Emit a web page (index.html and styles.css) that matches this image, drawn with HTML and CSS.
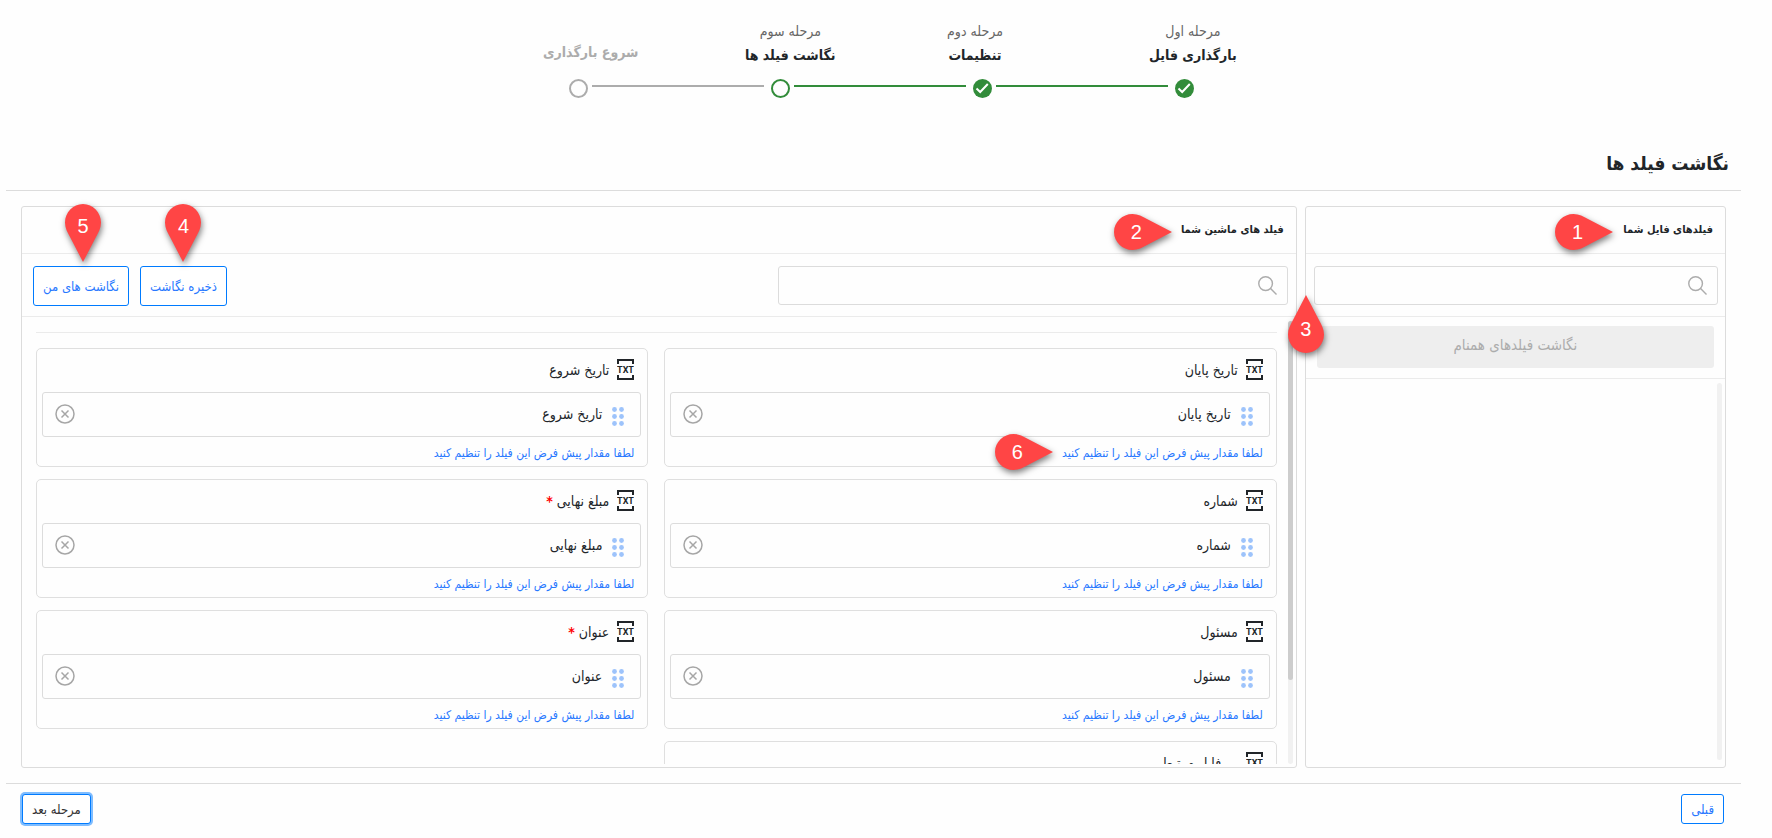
FILE: index.html
```html
<!DOCTYPE html>
<html lang="fa" dir="rtl">
<head>
<meta charset="utf-8">
<meta name="viewport" content="width=device-width, initial-scale=1">
<title>نگاشت فیلد ها</title>
<link rel="stylesheet" href="styles.css">
</head>
<body>
<svg class="sprite" aria-hidden="true">
  <symbol id="i-search" viewBox="0 0 20 20"><circle cx="8" cy="8" r="7.2"/><path d="M13 13l6.500 6.500"/></symbol>
  <symbol id="i-txt" viewBox="0 0 17 21"><path d="M1 5V1h15v4M1 16v4h15v-4"/><text x="8.5" y="14">TXT</text></symbol>
  <symbol id="i-drag" viewBox="0 0 12 19"><circle cx="2.5" cy="2.5" r="2.4"/><circle cx="9.5" cy="2.5" r="2.4"/><circle cx="2.5" cy="9.5" r="2.4"/><circle cx="9.5" cy="9.5" r="2.4"/><circle cx="2.5" cy="16.5" r="2.4"/><circle cx="9.5" cy="16.5" r="2.4"/></symbol>
  <symbol id="i-close" viewBox="0 0 20 20"><circle cx="10" cy="10" r="9"/><path d="M6.5 6.5l7 7M13.5 6.5l-7 7"/></symbol>
  <symbol id="i-done" viewBox="0 0 19 19"><circle cx="9.5" cy="9.5" r="9.5"/><path d="M3.5 9.5l3.7 3.5L14.8 5"/></symbol>
  <symbol id="i-pin" viewBox="0 0 36 58"><path d="M18 0C8 0 0 8.500 0 18.500C0 24 2.500 28.500 5 33L18 58L31 33C33.500 28.500 36 24 36 18.500C36 8.500 28 0 18 0Z"/></symbol>
  <symbol id="i-pin-up" viewBox="0 0 36 58"><path d="M18 58C8 58 0 49.500 0 39.500C0 34 2.500 29.500 5 25L18 0L31 25C33.500 29.500 36 34 36 39.500C36 49.500 28 58 18 58Z"/></symbol>
  <symbol id="i-pin-right" viewBox="0 0 58 36"><path d="M0 18C0 8 8.500 0 18.500 0C24 0 28.500 2.500 33 5L58 18L33 31C28.500 33.500 24 36 18.500 36C8.500 36 0 28 0 18Z"/></symbol>
</svg>

<ol class="stepper">
  <li class="step done">
    <div class="step-label"><span class="step-sub">مرحله اول</span><span class="step-title">بارگذاری فایل</span></div>
    <div class="step-marker"><svg class="check"><use href="#i-done"/></svg></div>
  </li>
  <li class="step done">
    <div class="step-label"><span class="step-sub">مرحله دوم</span><span class="step-title">تنظیمات</span></div>
    <div class="step-marker"><svg class="check"><use href="#i-done"/></svg><span class="step-line"></span></div>
  </li>
  <li class="step done" aria-current="step">
    <div class="step-label"><span class="step-sub">مرحله سوم</span><span class="step-title">نگاشت فیلد ها</span></div>
    <div class="step-marker"><span class="ring"></span><span class="step-line"></span></div>
  </li>
  <li class="step">
    <div class="step-label"><span class="step-title">شروع بارگذاری</span></div>
    <div class="step-marker"><span class="ring"></span><span class="step-line"></span></div>
  </li>
</ol>

<h1 class="page-title">نگاشت فیلد ها</h1>

<main class="panels">
  <section class="panel">
    <span class="pin pin-up pin-3"><svg><use href="#i-pin-up"/></svg><b>3</b></span>
    <header class="panel-head"><h2>فیلدهای فایل شما</h2>
      <span class="pin pin-right pin-1"><svg><use href="#i-pin-right"/></svg><b>1</b></span>
    </header>
    <div class="toolbar">
      <label class="search"><svg><use href="#i-search"/></svg><input type="search" aria-label="جستجو"></label>
    </div>
    <div class="match-row"><button class="match" type="button" disabled>نگاشت فیلدهای همنام</button></div>
    <div class="scroll-area"><div class="file-fields"></div><div class="track"></div></div>
  </section>

  <section class="panel">
    <header class="panel-head"><h2>فیلد های ماشین شما</h2>
      <span class="pin pin-right pin-2"><svg><use href="#i-pin-right"/></svg><b>2</b></span>
    </header>
    <div class="toolbar">
      <label class="search half"><svg><use href="#i-search"/></svg><input type="search" aria-label="جستجو"></label>
      <div class="actions">
        <div class="action"><button class="btn tall" type="button">ذخیره نگاشت</button><span class="pin pin-down"><svg><use href="#i-pin"/></svg><b>4</b></span></div>
        <div class="action"><button class="btn tall" type="button">نگاشت های من</button><span class="pin pin-down"><svg><use href="#i-pin"/></svg><b>5</b></span></div>
      </div>
    </div>
    <div class="scroll-area">
      <div class="fields">
        <hr class="divider">
        <div class="cards">
          <article class="card">
            <h3><svg class="txt"><use href="#i-txt"/></svg>تاریخ پایان</h3>
            <div class="mapped"><svg class="drag"><use href="#i-drag"/></svg><span>تاریخ پایان</span><button type="button" aria-label="حذف"><svg><use href="#i-close"/></svg></button></div>
            <a class="hint" href="#">لطفا مقدار پیش فرض این فیلد را تنظیم کنید</a>
            <span class="pin pin-right pin-6"><svg><use href="#i-pin-right"/></svg><b>6</b></span>
          </article>
          <article class="card">
            <h3><svg class="txt"><use href="#i-txt"/></svg>تاریخ شروع</h3>
            <div class="mapped"><svg class="drag"><use href="#i-drag"/></svg><span>تاریخ شروع</span><button type="button" aria-label="حذف"><svg><use href="#i-close"/></svg></button></div>
            <a class="hint" href="#">لطفا مقدار پیش فرض این فیلد را تنظیم کنید</a>
          </article>
          <article class="card">
            <h3><svg class="txt"><use href="#i-txt"/></svg>شماره</h3>
            <div class="mapped"><svg class="drag"><use href="#i-drag"/></svg><span>شماره</span><button type="button" aria-label="حذف"><svg><use href="#i-close"/></svg></button></div>
            <a class="hint" href="#">لطفا مقدار پیش فرض این فیلد را تنظیم کنید</a>
          </article>
          <article class="card">
            <h3><svg class="txt"><use href="#i-txt"/></svg><span>مبلغ نهایی <em>*</em></span></h3>
            <div class="mapped"><svg class="drag"><use href="#i-drag"/></svg><span>مبلغ نهایی</span><button type="button" aria-label="حذف"><svg><use href="#i-close"/></svg></button></div>
            <a class="hint" href="#">لطفا مقدار پیش فرض این فیلد را تنظیم کنید</a>
          </article>
          <article class="card">
            <h3><svg class="txt"><use href="#i-txt"/></svg>مسئول</h3>
            <div class="mapped"><svg class="drag"><use href="#i-drag"/></svg><span>مسئول</span><button type="button" aria-label="حذف"><svg><use href="#i-close"/></svg></button></div>
            <a class="hint" href="#">لطفا مقدار پیش فرض این فیلد را تنظیم کنید</a>
          </article>
          <article class="card">
            <h3><svg class="txt"><use href="#i-txt"/></svg><span>عنوان <em>*</em></span></h3>
            <div class="mapped"><svg class="drag"><use href="#i-drag"/></svg><span>عنوان</span><button type="button" aria-label="حذف"><svg><use href="#i-close"/></svg></button></div>
            <a class="hint" href="#">لطفا مقدار پیش فرض این فیلد را تنظیم کنید</a>
          </article>
          <article class="card">
            <h3><svg class="txt"><use href="#i-txt"/></svg>پروفایل مرتبط</h3>
          </article>
        </div>
      </div>
      <div class="track main-track"><div class="thumb"></div></div>
    </div>
  </section>
</main>

<footer class="footer">
  <button class="btn" type="button">قبلی</button>
  <button class="btn focused" type="button">مرحله بعد</button>
</footer>
</body>
</html>
```
FILE: styles.css
```css
* { box-sizing: border-box; }
body {
  margin: 0;
  padding: 0 31px 0 6px;
  height: 100vh;
  display: flex;
  flex-direction: column;
  background: #fefefe;
  color: #212529;
  font-family: "DejaVu Sans Condensed", "DejaVu Sans", sans-serif;
  font-size: 14px;
}
button, input { font: inherit; }
h1, h2, h3 { margin: 0; }
svg { display: block; fill: none; flex: none; }
.sprite { display: none; }

/* stepper */
.stepper {
  list-style: none;
  margin: 0 auto;
  padding: 20px 0 0 0;
  display: flex;
  width: 808px;
  margin-inline-end: 537px;
}
.step { width: 202px; direction: ltr; color: #acacac; }
.step-label {
  display: inline-flex;
  flex-direction: column;
  align-items: center;
  justify-content: center;
  height: 48px;
  white-space: nowrap;
  direction: rtl;
}
.step-label :only-child { padding-top: 16px; }
.step-sub { color: #666; line-height: 22px; }
.step-title { font-weight: bold; line-height: 26px; }
.done .step-title { color: #212529; }
.step-marker { display: flex; align-items: center; gap: 4px; padding: 11px 0 0 26px; }
.ring { flex: none; width: 19px; height: 19px; border: 2px solid #acacac; border-radius: 50%; }
.done .ring { border-color: #328c3a; }
.check { width: 19px; height: 19px; fill: #328c3a; }
#i-done path { fill: none; stroke: #fff; stroke-width: 2; }
.step-line { flex: none; width: 172px; height: 2px; margin-bottom: 5px; background: #acacac; }
.done .step-line { background: #328c3a; }

.page-title {
  margin-top: 48px;
  padding: 0 12px 10px 0;
  border-bottom: 1px solid #dcdcdc;
  font-size: 19px;
  line-height: 34px;
}

/* panels */
.panels {
  flex: 1;
  min-height: 0;
  display: grid;
  grid-template-columns: calc(25% - 5px) 1fr;
  grid-template-rows: 100%;
  gap: 8px;
  margin: 15px 15px 15px 15px;
}
.panel {
  position: relative;
  display: flex;
  flex-direction: column;
  min-width: 0;
  min-height: 0;
  border: 1px solid #dcdcdc;
  border-radius: 3px;
}
.panel-head {
  position: relative;
  display: flex;
  align-items: center;
  height: 47px;
  padding: 0 12px;
  border-bottom: 1px solid #ebebeb;
}
.panel-head h2 { font-size: 11px; line-height: 20px; }
.toolbar {
  display: flex;
  justify-content: space-between;
  padding: 12px 8px 11px 11px;
  height: 63px;
  border-bottom: 1px solid #ebebeb;
}
.panel:first-child .toolbar { padding: 12px 7px 11px 8px; }
.search {
  flex: 1;
  display: flex;
  align-items: center;
  height: 39px;
  padding: 0 10px;
  border: 1px solid #dcdcdc;
  border-radius: 3px;
}
.search.half { flex: 0 0 510px; }
.search svg { width: 19px; height: 19px; stroke: #acacac; stroke-width: 1.5; }
.search input { flex: 1; min-width: 0; border: 0; outline: 0; background: transparent; }
.actions { display: flex; gap: 11px; }
.action { position: relative; }
.btn {
  height: 30px;
  padding: 0 9px;
  border: 1px solid #007bff;
  border-radius: 3px;
  background: #fff;
  color: #2878ff;
  font-size: 13px;
  white-space: nowrap;
}
.btn.tall { height: 40px; }
.btn.focused { color: #333; box-shadow: 0 0 0 2px rgba(0, 123, 255, .5); }

.match-row { padding: 9px 11px 10px; border-bottom: 1px solid #ebebeb; }
.match {
  display: block;
  width: 100%;
  height: 42px;
  padding: 0 0 4px;
  border: 0;
  border-radius: 3px;
  background: #eee;
  color: #acacac;
  font-size: 15px;
}

.scroll-area { flex: 1; min-height: 0; display: flex; padding: 4px 0 3px 3px; }
.fields { order: 2; flex: 1; overflow: hidden; }
.file-fields { order: 2; flex: 1; }
.track { width: 5px; margin: 0 3px 4px 0; border-radius: 3px; background: #f1f1f1; }
.main-track { margin: 0 3px 0 11px; }
.thumb { height: 81%; border-radius: 3px; background: #cdcdcd; }
.divider { margin: 11px 0 15px 11px; border: 0; border-top: 1px solid #ebebeb; }
.cards { display: grid; grid-template-columns: 1fr 1fr; gap: 12px 16px; padding-left: 11px; }
.card {
  position: relative;
  height: 119px;
  border: 1px solid #dfdfdf;
  border-radius: 5px;
  padding: 0 6px 0 5px;
}
.card h3 {
  display: flex;
  align-items: center;
  gap: 8px;
  height: 43px;
  padding: 0 7px 2px;
  font-size: 14px;
  font-weight: normal;
}
.card em { color: #f00; font-style: normal; font-weight: bold; }
.txt { width: 17px; height: 21px; stroke: #212529; stroke-width: 2; }
#i-txt text {
  fill: #212529;
  stroke: none;
  font-family: "Liberation Sans Narrow", Roboto, sans-serif;
  font-size: 9px;
  font-weight: bold;
  text-anchor: middle;
  direction: ltr;
}
.mapped {
  display: flex;
  align-items: center;
  height: 45px;
  padding: 0 16px 2px 12px;
  border: 1px solid #dcdcdc;
  border-radius: 3px;
}
.mapped span { flex: 1; margin-right: 10px; }
.drag { width: 12px; height: 19px; margin-top: 5px; fill: #9dc3fb; }
.mapped button { padding: 0; border: 0; background: none; }
.mapped button svg { width: 20px; height: 20px; stroke: #a6a6a6; stroke-width: 1.5; }
.hint {
  display: block;
  padding: 0 7px;
  color: #2878ff;
  font-size: 12px;
  line-height: 32px;
  text-decoration: none;
}

/* numbered pins lying over the page */
.pin { position: absolute; z-index: 2; width: 36px; height: 58px; }
.pin svg { width: 100%; height: 100%; fill: #ff4545; overflow: visible; filter: drop-shadow(1px 3px 3px rgba(0, 0, 0, .5)); }
.pin b {
  position: absolute;
  inset: 0 0 auto;
  color: #fff;
  font: 20px/44px "Liberation Sans", Arial, sans-serif;
  text-align: center;
}
.pin-up b { inset: auto 0 0; line-height: 48px; }
.pin-right { width: 58px; height: 36px; }
.pin-right b { inset: 0 13px 0 0; line-height: 36px; }
.pin-down { left: 50%; bottom: 43px; margin-left: -18px; }
.action .pin-down { bottom: 43px; }
.action:last-child .pin-down { margin-left: -16px; }
.pin-1 { right: 112px; top: 7px; }
.pin-2 { right: 124px; top: 7px; }
.pin-3 { left: -18px; top: 88px; }
.pin-6 { right: 223px; top: 85px; }

.footer {
  display: flex;
  justify-content: space-between;
  padding: 10px 17px 14px 16px;
  border-top: 1px solid #dcdcdc;
}
```
